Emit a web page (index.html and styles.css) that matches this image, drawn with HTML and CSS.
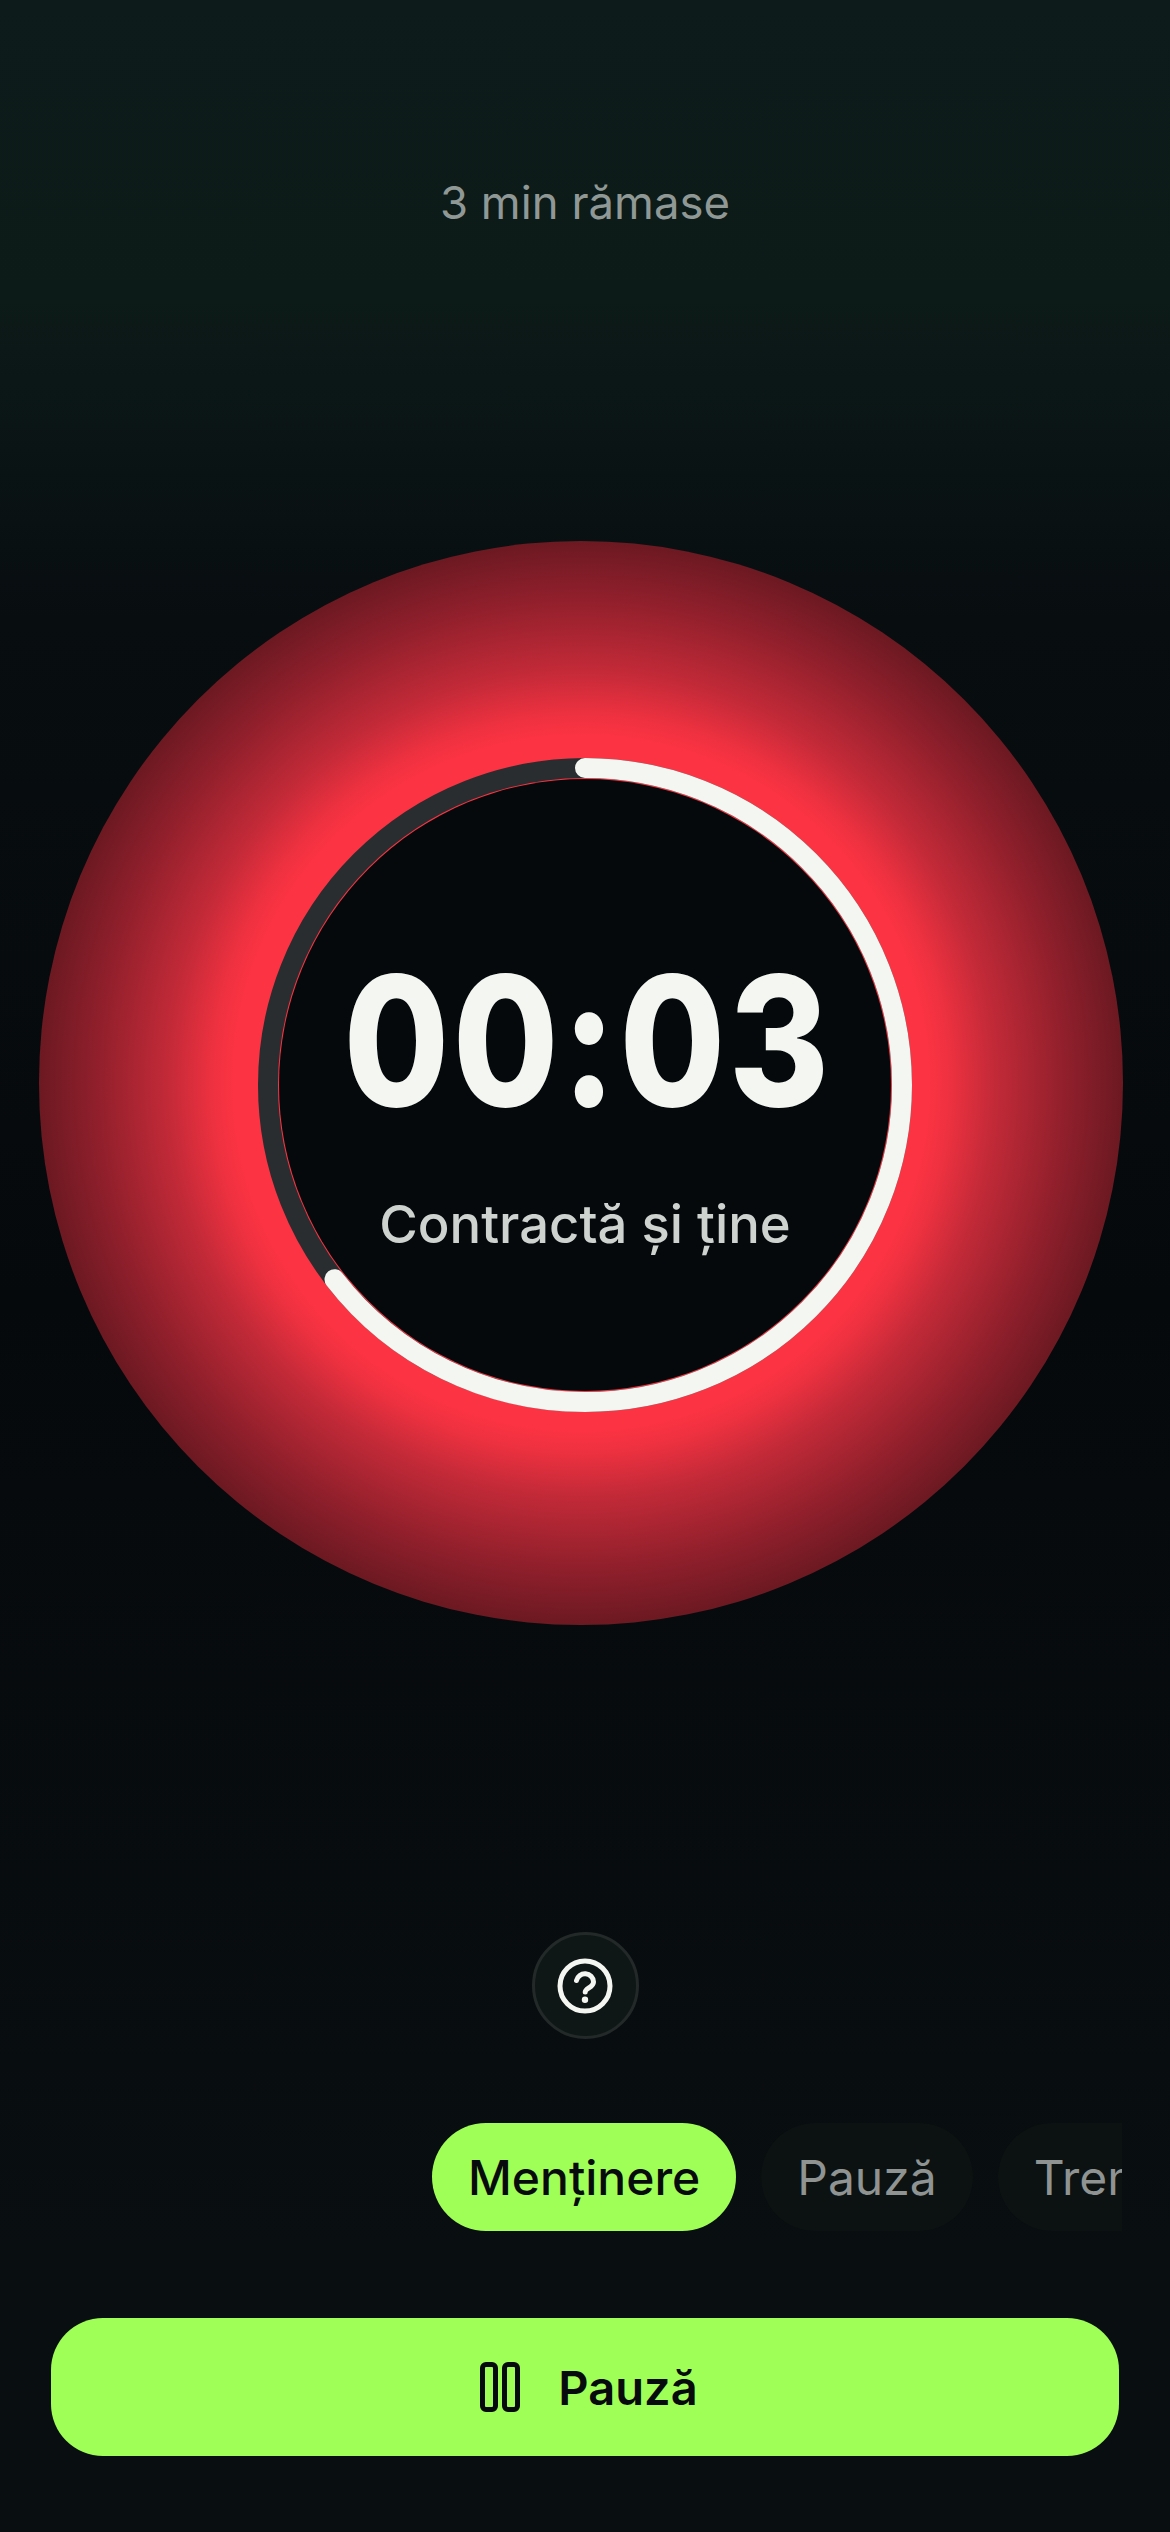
FILE: index.html
```html
<!DOCTYPE html>
<html lang="ro">
<head>
<meta charset="utf-8">
<title>Contractă și ține</title>
<link rel="stylesheet" href="styles.css">
</head>
<body>
<main class="screen">
  <p class="remaining">3 min rămase</p>
  <section class="timer">
    <div class="glow"></div>
    <div class="disk"></div>
    <svg class="ring" viewBox="0 0 654 654" aria-hidden="true">
      <circle class="ring-track" cx="327" cy="327" r="317"/>
      <circle class="ring-progress" cx="327" cy="327" r="317" pathLength="100" transform="rotate(-90 327 327)"/>
    </svg>
    <div class="readout">
      <div class="time">00:03</div>
      <div class="cue">Contractă și ține</div>
    </div>
  </section>
  <button class="help" aria-label="Ajutor">
    <svg class="help-icon" viewBox="0 0 56 56" aria-hidden="true">
      <circle cx="28" cy="28" r="25" fill="none" stroke="#f4f6f2" stroke-width="5"/>
      <path d="M19.5 22.5a8.6 8.6 0 0 1 17 1.4c0 5.5-8.3 6.2-8.3 10.2" fill="none" stroke="#f4f6f2" stroke-width="5" stroke-linecap="round"/>
      <circle cx="28" cy="41.8" r="3.2" fill="#f4f6f2"/>
    </svg>
  </button>
  <nav class="chips">
    <span class="chip chip-active">Menținere</span>
    <span class="chip">Pauză</span>
    <span class="chip">Tremurat</span>
  </nav>
  <button class="primary">
    <svg class="pause-icon" viewBox="0 0 40 50" aria-hidden="true">
      <rect x="2.5" y="2.5" width="13" height="45" rx="3.5"/>
      <rect x="24.5" y="2.5" width="13" height="45" rx="3.5"/>
    </svg>
    <span>Pauză</span>
  </button>
</main>
</body>
</html>
```
FILE: styles.css
```css
* { box-sizing: border-box; }
html, body { margin: 0; padding: 0; background: #070b0e; }
.screen {
  width: 1170px;
  height: 2532px;
  overflow: hidden;
  display: flex;
  flex-direction: column;
  align-items: center;
  font-family: Inter, "Noto Sans", sans-serif;
  background: linear-gradient(180deg, #0d1c1a 0, #0c1a18 300px, #080d10 620px, #05090c 1300px, #090e10 2250px, #090e10 2532px);
}
.remaining {
  margin: 176px 0 0;
  height: 54px;
  font-size: 45.5px;
  line-height: 54px;
  color: #8f9895;
}
.timer {
  position: relative;
  width: 654px;
  height: 654px;
  margin-top: 528px;
  flex: none;
}
.glow {
  position: absolute;
  left: -219px;
  top: -217px;
  width: 1084px;
  height: 1084px;
  border-radius: 50%;
  background: radial-gradient(circle closest-side, #fc3342 0, #fc3342 64%, #ee3140 68%, #c42a38 76%, #8e1f2b 90%, #6c1922 100%);
}
.disk {
  position: absolute;
  left: 21px;
  top: 21px;
  width: 612px;
  height: 612px;
  border-radius: 50%;
  background: #05090c;
}
.ring {
  position: absolute;
  left: 0;
  top: 0;
  width: 654px;
  height: 654px;
}
.ring-track { fill: none; stroke: #2a2d30; stroke-width: 20; }
.ring-progress {
  fill: none;
  stroke: #f4f6f2;
  stroke-width: 20;
  stroke-linecap: round;
  stroke-dasharray: 64.5 100;
}
.readout {
  position: relative;
  height: 100%;
  display: flex;
  flex-direction: column;
  align-items: center;
  padding-top: 183px;
}
.time {
  padding-left: 8px;
  font-size: 180px;
  line-height: 200px;
  font-weight: 800;
  letter-spacing: 4px;
  color: #f4f6f2;
  transform: scaleX(0.85);
}
.cue {
  margin-top: 51px;
  font-size: 52.6px;
  line-height: 64px;
  font-weight: 500;
  color: #cfd3d0;
}
.help {
  width: 107px;
  height: 107px;
  margin-top: 520px;
  padding: 0;
  flex: none;
  display: flex;
  align-items: center;
  justify-content: center;
  border: 3px solid #232929;
  border-radius: 50%;
  background: #0f1716;
}
.help-icon { width: 56px; height: 56px; }
.chips {
  width: 1074px;
  height: 108px;
  margin-top: 84px;
  padding-left: 384px;
  flex: none;
  display: flex;
  gap: 25px;
  overflow: hidden;
}
.chip {
  flex: none;
  height: 108px;
  padding: 0 36px;
  display: flex;
  align-items: center;
  border-radius: 54px;
  font-size: 48px;
  font-weight: 400;
  color: #8f9493;
  background: #0b1211;
}
.chip-active {
  font-weight: 500;
  color: #070b0e;
  background: #a0ff57;
}
.primary {
  width: 1068px;
  height: 138px;
  margin-top: 87px;
  padding: 0 0 0 8px;
  flex: none;
  display: flex;
  align-items: center;
  justify-content: center;
  gap: 38px;
  border: 0;
  border-radius: 52px;
  background: #a0ff57;
  color: #070b0e;
  font-family: inherit;
  font-size: 47px;
  font-weight: 600;
}
.pause-icon { width: 40px; height: 50px; }
.pause-icon rect { fill: none; stroke: #070b0e; stroke-width: 5; }
```
